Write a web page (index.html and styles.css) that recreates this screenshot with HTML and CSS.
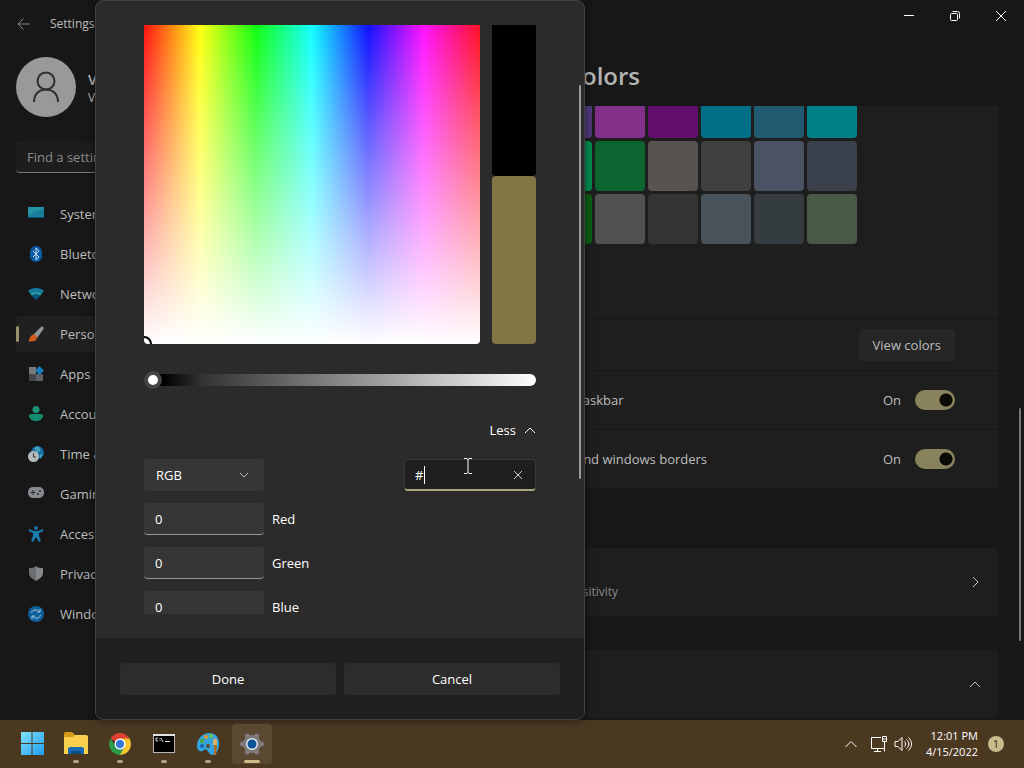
FILE: index.html
```
<!DOCTYPE html>
<html lang="en">
  <head>
    <meta charset="UTF-8" />
    <meta name="viewport" content="width=device-width, initial-scale=1.0" />
    <title>Settings</title>
    <link rel="stylesheet" href="styles.css">
  </head>
  <body>
    <div class="window">
      <header class="titlebar">
        <button class="back" aria-label="Back">
          <svg width="16" height="16" viewBox="0 0 16 16"><path d="M14 8H2.500M7.500 2.500L2 8l5.500 5.500" /></svg>
        </button>
        <span class="app-name">Settings</span>
        <div class="controls">
          <button aria-label="Minimize"><svg width="12" height="12" viewBox="0 0 12 12"><path d="M1 5.500h10" /></svg></button>
          <button aria-label="Restore"><svg width="12" height="12" viewBox="0 0 12 12"><rect x="1.500" y="3.500" width="7" height="7" rx="1" /><path d="M3.500 1.500h5a2 2 0 0 1 2 2v5" /></svg></button>
          <button aria-label="Close"><svg width="12" height="12" viewBox="0 0 12 12"><path d="M1 1l10 10M11 1L1 11" /></svg></button>
        </div>
      </header>

      <aside class="sidebar">
        <div class="profile">
          <div class="avatar">
            <svg width="28" height="32" viewBox="0 0 28 32"><circle cx="14" cy="10" r="8.500" /><path d="M2 31c0-8 5-12.500 12-12.500S26 23 26 31" /></svg>
          </div>
          <div class="user">
            <p class="name">VM User</p>
            <p class="account">VM Local Account</p>
          </div>
        </div>
        <input class="search" type="text" placeholder="Find a setting" aria-label="Find a setting" />
        <nav>
          <a href="#system">
            <svg width="16" height="16" viewBox="0 0 16 16"><path fill="#1a7f9c" d="M1 1h14a1 1 0 0 1 1 1v10H0V2a1 1 0 0 1 1-1z" /><path fill="#2496a3" d="M1 1h14a1 1 0 0 1 1 1L0 9V2a1 1 0 0 1 1-1z" /><path fill="#0a4f70" d="M0 11h16v1H0z" /></svg>
            System
          </a>
          <a href="#bluetooth">
            <svg width="16" height="16" viewBox="0 0 16 16"><rect x="2" width="12" height="16" rx="6" fill="#0b5ba7" /><path d="M5 5l6 6-3 3V2l3 3-6 6" fill="none" stroke="#c8dcef" /></svg>
            Bluetooth &amp; devices
          </a>
          <a href="#network">
            <svg width="16" height="16" viewBox="0 0 16 16"><path fill="#147ca5" d="M0 5c4-4 12-4 16 0l-2 2.500c-3-3-9-3-12 0z" /><path fill="#2793a5" d="M2 7.500c3-3 9-3 12 0L12 10c-2-2-6-2-8 0z" /><path fill="#0a5686" d="M4 10c2-2 6-2 8 0l-4 4z" /></svg>
            Network &amp; internet
          </a>
          <a href="#personalization" class="selected">
            <svg width="16" height="16" viewBox="0 0 16 16"><path fill="#929599" d="M5 9L13 1c1-1 3 0 2.500 2L9 12z" /><path fill="#cd5c1d" d="M5 8.500c2 0 4 1.500 4 3.500-1 4-6 4-9 3 2-1 1-5 5-6.500z" /></svg>
            Personalization
          </a>
          <a href="#apps">
            <svg width="16" height="16" viewBox="0 0 16 16"><path fill="#777b80" d="M1 1h7v7H1z" /><path fill="#44484d" d="M1 8h7v7H1z" /><path fill="#5d6268" d="M8 8h7v7H8z" /><path fill="#167fbd" d="M11.500 0l4.500 4.500L11.500 9 7 4.500z" /></svg>
            Apps
          </a>
          <a href="#accounts">
            <svg width="16" height="16" viewBox="0 0 16 16"><circle cx="8" cy="3.500" r="3.500" fill="#1b9178" /><path fill="#138b72" d="M3 8h10c4 0 2 7-5 7S-1 8 3 8z" /></svg>
            Accounts
          </a>
          <a href="#time">
            <svg width="16" height="16" viewBox="0 0 16 16"><circle cx="9.500" cy="6.500" r="6.500" fill="#176ca3" /><path fill="#41a1bd" d="M6 2l4-2 3 4-4 3zM12 8l3 1-3 4z" /><circle cx="5.500" cy="10.500" r="5.500" fill="#b4babd" /><path d="M5.500 7v4H8" fill="none" stroke="#34383b" /></svg>
            Time &amp; language
          </a>
          <a href="#gaming">
            <svg width="16" height="16" viewBox="0 0 16 16"><rect y="1" width="16" height="11" rx="5" fill="#888c91" /><path d="M2.500 6.500h5M5 4v5" stroke="#292b2e" fill="none" /><circle cx="10" cy="8" r="1" fill="#292b2e" /><circle cx="12" cy="5" r="1" fill="#292b2e" /></svg>
            Gaming
          </a>
          <a href="#accessibility">
            <svg width="16" height="16" viewBox="0 0 16 16"><circle cx="8" cy="2" r="2" fill="#1673aa" /><path fill="#187aaf" d="M1 3l5 2h4l5-2 .5 2L11 7v3l2 5-2 1-3-5-3 5-2-1 2-5V7L.5 5z" /></svg>
            Accessibility
          </a>
          <a href="#privacy">
            <svg width="16" height="16" viewBox="0 0 16 16"><path fill="#85898c" d="M8 0c2 2 4 2 7 2v5c0 4-4 6-7 8z" /><path fill="#6c7073" d="M8 0C6 2 4 2 1 2v5c0 4 4 6 7 8z" /></svg>
            Privacy &amp; security
          </a>
          <a href="#update">
            <svg width="16" height="16" viewBox="0 0 16 16"><circle cx="8" cy="8" r="8" fill="#0f609a" /><path d="M3.500 7c1-4 6-4 8-1M12 3v3H9M12.500 9c-1 4-6 4-8 1M4 13v-3h3" fill="none" stroke="#a6c7df" /></svg>
            Windows Update
          </a>
        </nav>
      </aside>

      <main>
        <h1>Personalization &rsaquo; Colors</h1>
        <div class="scroller">
          <section class="card colors">
            <div class="swatches"></div>
            <div class="row short">
              <button class="view">View colors</button>
            </div>
            <div class="row">
              <label for="taskbar">Show accent color on Start and taskbar</label>
              <span class="state">On</span>
              <input class="toggle" type="checkbox" id="taskbar" checked />
            </div>
            <div class="row">
              <label for="borders">Show accent color on title bars and windows borders</label>
              <span class="state">On</span>
              <input class="toggle" type="checkbox" id="borders" checked />
            </div>
          </section>
          <section class="card link">
            <div>
              <p>Contrast themes</p>
              <p class="description">Color themes for low vision, light sensitivity</p>
            </div>
            <svg width="12" height="12" viewBox="0 0 12 12"><path d="M4 1l5 5-5 5" /></svg>
          </section>
          <section class="card link" aria-label="Related links">
            <svg width="12" height="12" viewBox="0 0 12 12"><path d="M1 9l5-5 5 5" /></svg>
          </section>
        </div>
      </main>
      <div class="page-scroll"></div>

      <div class="dialog" role="dialog" aria-label="Choose custom accent color">
        <div class="picker">
          <div class="spectrum-row">
            <div class="spectrum"><span class="marker"></span></div>
            <div class="preview">
              <div class="new-color"></div>
              <div class="old-color"></div>
            </div>
          </div>
          <input class="value" type="range" min="0" max="100" value="0" aria-label="Value" />
          <button class="less">Less <svg width="12" height="12" viewBox="0 0 12 12"><path d="M1 9l5-5 5 5" /></svg></button>
          <div class="fields">
            <div class="mode">
              <select aria-label="Color mode">
                <option>RGB</option>
                <option>HSV</option>
              </select>
              <svg width="10" height="10" viewBox="0 0 10 10"><path d="M1 3l4 4 4-4" /></svg>
            </div>
            <div class="hex">
              <input type="text" value="#" aria-label="Hex" />
              <span class="caret"></span>
              <button aria-label="Clear"><svg width="10" height="10" viewBox="0 0 10 10"><path d="M1 1l8 8M9 1L1 9" /></svg></button>
            </div>
          </div>
          <div class="channel">
            <input type="text" id="red" value="0" />
            <label for="red">Red</label>
          </div>
          <div class="channel">
            <input type="text" id="green" value="0" />
            <label for="green">Green</label>
          </div>
          <div class="channel">
            <input type="text" id="blue" value="0" />
            <label for="blue">Blue</label>
          </div>
        </div>
        <footer>
          <button>Done</button>
          <button>Cancel</button>
        </footer>
        <div class="dialog-scroll"></div>
        <svg class="cursor" width="10" height="18" viewBox="0 0 10 18"><path d="M1 1.500h3l1 1 1-1h3M5 2v14M1 16.500h3l1-1 1 1h3" /></svg>
      </div>
    </div>

    <div class="taskbar">
      <div class="apps">
        <button aria-label="Start">
          <svg width="24" height="24" viewBox="0 0 24 24"><defs><linearGradient id="win" x2="1" y2="1"><stop stop-color="#7fe3fb" /><stop offset="1" stop-color="#1f9df0" /></linearGradient></defs><path fill="url(#win)" d="M1 0h10.500v11H1zM12.500 0H24v11H12.500zM1 12h10.500v11H1zM12.500 12H24v11H12.500z" /></svg>
        </button>
        <button class="open" aria-label="File Explorer">
          <svg width="26" height="24" viewBox="0 0 26 24"><path fill="#d79a16" d="M1 2a2 2 0 0 1 2-2h6l3 3h10v5H1z" /><path fill="#fbd04f" d="M1 5h9l2-2h11a2 2 0 0 1 2 2v17H1z" /><path fill="#176bb2" d="M5 22v-5a2 2 0 0 1 2-2h12a2 2 0 0 1 2 2v5z" /><path fill="#0d4d84" d="M8 19h10v3H8z" /></svg>
        </button>
        <button class="open" aria-label="Chrome">
          <svg width="24" height="24" viewBox="0 0 24 24"><path fill="#dc4132" d="M12 12L2.500 6.500A11 11 0 0 1 21.500 6.500z" /><path fill="#f8c62f" d="M12 12V6.500h9.500A11 11 0 0 1 12 23z" /><path fill="#2b9b4b" d="M12 12l4.500 3L12 23A11 11 0 0 1 2.500 6.500l5 8z" /><circle cx="12" cy="12" r="5.500" fill="#fff" /><circle cx="12" cy="12" r="4.200" fill="#3578d8" /></svg>
        </button>
        <button class="open" aria-label="Command Prompt">
          <svg width="24" height="24" viewBox="0 0 24 24"><path fill="#b5b5b5" d="M1 2h22v19H1z" /><path fill="#e3e3e3" d="M1 2h22v2H1z" /><path d="M2 4h20v16H2z" /><path d="M6 6H4v3h2M8 6v1M8 8v1M9 6l2 4M13 9.500h5" fill="none" stroke="#ddd" /></svg>
        </button>
        <button class="open" aria-label="Paint">
          <svg width="24" height="24" viewBox="0 0 24 24"><path fill="#33a5df" d="M14 1C6 1 1 7 1 14c0 5 4 7 7 4s4 4 8 5c4 0 7-5 7-11S20 1 14 1z" /><circle cx="6" cy="9" r="2.200" fill="#4aa843" /><circle cx="10" cy="5" r="2" fill="#e99324" /><circle cx="15" cy="4" r="2" fill="#72c64c" /><circle cx="6" cy="14" r="2" fill="#1769b0" /><circle cx="12" cy="14" r="2" fill="#5f4930" /><path fill="#d9b270" d="M17 8c1-2 3-2 4 0v5h-4z" /><path fill="#ae6c24" d="M18 13h3l-1 10h-2z" /></svg>
        </button>
        <button class="open active" aria-label="Settings">
          <svg width="26" height="24" viewBox="0 0 26 24"><circle cx="13" cy="12" r="9" fill="#81787a" /><path stroke="#81787a" stroke-width="5" stroke-linecap="round" d="M3.500 12h19M8.300 4l9.400 16M17.700 4L8.300 20" /><circle cx="13" cy="12" r="6" fill="#dce8f2" /><circle cx="13" cy="12" r="4.500" fill="#0b5498" /></svg>
        </button>
      </div>
      <div class="tray">
        <svg width="14" height="14" viewBox="0 0 14 14"><path d="M1.500 10L7 4.500 12.500 10" /></svg>
        <svg class="network" width="18" height="18" viewBox="0 0 18 18"><path d="M11 2.500H1.500v11H14M7.500 13.500v3M4 16.500h7M12.500 1.500h4v5h-4zM14.500 6.500v10M12.500 4h4" /></svg>
        <svg width="18" height="16" viewBox="0 0 18 16"><path d="M1 5.500h3l4-4v13l-4-4H1zM10.500 5.500c1.500 1.500 1.500 3.500 0 5M12.500 3.500c3 3 3 6 0 9M14.500 1.500c4 4 4 9 0 13" /></svg>
        <div class="clock">
          <p>12:01 PM</p>
          <p>4/15/2022</p>
        </div>
        <span class="badge">1</span>
      </div>
    </div>

    <script>
      // accent colors, nine per row
      const colors = [
        "#2a5a8c", "#6b69d6", "#4a3c90", "#51397c", "#82308a", "#600d6b", "#006f87", "#205a70", "#00818a",
        "#016a5e", "#00705f", "#00804c", "#008e52", "#0c6530", "#575350", "#403f3d", "#4a5263", "#3a3f4c",
        "#34602f", "#316a2c", "#10680f", "#0b5c16", "#515151", "#353433", "#48535a", "#343c40", "#485a45",
      ];
      const swatches = document.querySelector(".swatches");
      colors.forEach((color) => {
        const swatch = document.createElement("button");
        swatch.style.backgroundColor = color;
        swatch.setAttribute("aria-label", color);
        swatches.appendChild(swatch);
      });
    </script>
  </body>
</html>
```
FILE: styles.css
```
* {
  box-sizing: border-box;
  margin: 0;
  padding: 0;
}

body {
  display: flex;
  flex-direction: column;
  height: 100vh;
  overflow: hidden;
  background-color: #171717;
  color: #bdbdbd;
  font-family: "Open Sans", "Noto Sans", sans-serif;
  font-size: 13px;
  line-height: 20px;
}

button,
input,
select {
  border: none;
  background: none;
  color: inherit;
  font: inherit;
  outline: none;
}

svg {
  display: block;
  flex: none;
}

/* window */
.window {
  position: relative;
  flex: 1;
  min-height: 0;
  display: grid;
  grid-template-columns: 351px 1fr;
  grid-template-rows: 48px 1fr;
}

.titlebar {
  grid-column: 1 / 3;
  display: flex;
  align-items: center;
  padding-left: 16px;
}

.titlebar svg,
.link svg,
.less svg,
.mode svg,
.hex svg,
.cursor {
  fill: none;
  stroke: currentColor;
}

.back {
  color: #888;
  margin-right: 18px;
}

.app-name {
  font-size: 12px;
}

.controls {
  display: flex;
  align-self: flex-start;
  margin-left: auto;
  color: #fff;
}

.controls button {
  display: grid;
  place-items: center;
  width: 46px;
  height: 32px;
}

/* sidebar */
.sidebar {
  padding: 9px 16px;
}

.profile {
  display: flex;
  align-items: center;
  gap: 12px;
  margin-bottom: 24px;
  line-height: 18px;
}

.user {
  padding-top: 4px;
}

.avatar {
  display: grid;
  place-items: center;
  width: 60px;
  height: 60px;
  border-radius: 50%;
  background-color: #999;
}

.avatar svg {
  fill: none;
  stroke: #2e2e2e;
  stroke-width: 2;
}

.name {
  font-size: 14px;
  font-weight: 600;
}

.account {
  font-size: 12px;
}

.search {
  width: 100%;
  height: 32px;
  padding: 0 11px;
  border-bottom: 1px solid #777;
  border-radius: 4px;
  background-color: #1d1d1d;
}

.search::placeholder {
  color: #8c8c8c;
}

nav {
  display: grid;
  gap: 4px;
  margin-top: 23px;
}

nav a {
  display: flex;
  align-items: center;
  gap: 16px;
  height: 36px;
  padding-left: 12px;
  border-radius: 4px;
  color: inherit;
  text-decoration: none;
}

.selected {
  position: relative;
  background-color: #202020;
}

.selected::before {
  content: "";
  position: absolute;
  left: 0;
  width: 3px;
  height: 16px;
  border-radius: 2px;
  background-color: #9a916a;
}

/* content */
main {
  display: flex;
  flex-direction: column;
  min-height: 0;
  padding: 10px 25px 0 16px;
}

h1 {
  color: #b3b3b3;
  font-size: 24px;
  font-weight: 600;
  line-height: 36px;
}

.scroller {
  flex: 1;
  min-height: 0;
  margin-top: 12px;
  overflow: hidden;
}

.card {
  border-radius: 5px;
  background-color: #1e1e1e;
}

.colors {
  margin-top: -18px;
}

.swatches {
  display: grid;
  grid-template-columns: repeat(9, 50px);
  gap: 3px;
  padding: 0 16px 74px;
}

.swatches button {
  height: 50px;
  border-radius: 4px;
}

.row {
  display: flex;
  align-items: center;
  height: 59px;
  padding: 0 44px 0 20px;
  border-top: 1px solid #171717;
}

.short {
  height: 52px;
}

.view {
  height: 32px;
  margin-left: auto;
  padding: 0 14px;
  border-radius: 4px;
  background-color: #262626;
}

.state {
  margin-left: auto;
}

.toggle {
  appearance: none;
  width: 40px;
  height: 20px;
  margin-left: 14px;
  border-radius: 10px;
  background: radial-gradient(circle at 31px 10px, #0a0a06 6px, transparent 7px) #88835c;
}

.link {
  display: flex;
  align-items: center;
  height: 68px;
  margin-top: 60px;
  padding: 0 18px 0 10px;
}

.link + .link {
  margin-top: 34px;
}

.link svg {
  margin-left: auto;
}

.description {
  color: #888;
  font-size: 12px;
}

.page-scroll {
  position: absolute;
  top: 408px;
  right: 3px;
  width: 2px;
  height: 233px;
  border-radius: 1px;
  background-color: #777;
}

/* color dialog */
.dialog {
  position: absolute;
  top: 0;
  bottom: 0;
  left: 95px;
  width: 490px;
  display: flex;
  flex-direction: column;
  border: 1px solid #404040;
  border-radius: 8px;
  background-color: #2b2b2b;
  box-shadow: 0 0 8px #0008;
  color: #fff;
  overflow: hidden;
}

.picker {
  flex: 1;
  min-height: 0;
  margin: 24px 48px;
  overflow: hidden;
}

.spectrum-row {
  display: flex;
  gap: 12px;
  height: 319px;
}

.spectrum {
  position: relative;
  flex: 1;
  overflow: hidden;
  border-radius: 0 0 4px 4px;
  background: linear-gradient(transparent, #fff), linear-gradient(to right, #f11, #ff1, #1f1, #1ff, #11f, #f1f, #f12);
}

.marker {
  position: absolute;
  bottom: -8px;
  left: -8px;
  width: 16px;
  height: 16px;
  border: 2px solid #000;
  border-radius: 50%;
}

.preview {
  display: flex;
  flex-direction: column;
  width: 44px;
}

.new-color {
  flex: 9;
  border-radius: 0 0 4px 4px;
  background-color: #000;
}

.old-color {
  flex: 10;
  border-radius: 4px;
  background-color: #827644;
}

.value {
  appearance: none;
  display: block;
  width: 100%;
  height: 12px;
  margin-top: 30px;
  border-radius: 6px;
  background: linear-gradient(to right, #000 5%, #333 15%, #fff);
}

.value::-webkit-slider-thumb {
  appearance: none;
  width: 18px;
  height: 18px;
  border: 4px solid #454545;
  border-radius: 50%;
  background-color: #fff;
}

.less {
  display: flex;
  align-items: center;
  gap: 8px;
  height: 32px;
  margin: 28px 0 13px auto;
}

.fields {
  display: flex;
  justify-content: space-between;
  margin-bottom: 12px;
}

.mode {
  position: relative;
  width: 120px;
}

.mode select {
  appearance: none;
  width: 100%;
  height: 32px;
  padding: 0 12px;
  border-radius: 4px;
  background-color: #363636;
}

.mode svg {
  position: absolute;
  top: 11px;
  right: 15px;
  color: #bbb;
  pointer-events: none;
}

.hex {
  position: relative;
  display: flex;
  align-items: center;
  width: 132px;
  height: 32px;
  padding-right: 12px;
  border: 1px solid #383838;
  border-bottom: 2px solid #aaa67b;
  border-radius: 4px;
  background-color: #1f1f1f;
}

.hex input {
  flex: 1;
  min-width: 0;
  padding-left: 10px;
}

.hex svg {
  color: #ccc;
}

.caret {
  position: absolute;
  top: 6px;
  left: 19px;
  width: 1px;
  height: 18px;
  background-color: #fff;
}

.channel {
  display: flex;
  align-items: center;
  gap: 8px;
  margin-bottom: 12px;
}

.channel input {
  width: 120px;
  height: 32px;
  padding: 0 11px;
  border-bottom: 1px solid #999;
  border-radius: 4px;
  background-color: #363636;
}

footer {
  display: flex;
  gap: 8px;
  padding: 24px;
  border-top: 1px solid #1c1c1c;
  background-color: #202020;
}

footer button {
  flex: 1;
  height: 32px;
  border-radius: 4px;
  background-color: #2c2c2c;
}

.dialog-scroll {
  position: absolute;
  top: 84px;
  right: 3px;
  width: 2px;
  height: 394px;
  border-radius: 1px;
  background-color: #999;
}

.cursor {
  position: absolute;
  top: 456px;
  left: 367px;
}

/* taskbar */
.taskbar {
  display: flex;
  align-items: center;
  justify-content: space-between;
  height: 48px;
  padding: 0 20px 0 12px;
  background-color: #4b3821;
  color: #fff;
}

.apps {
  display: flex;
  gap: 4px;
}

.apps button {
  position: relative;
  display: grid;
  place-items: center;
  width: 40px;
  height: 40px;
  border-radius: 4px;
}

.open::after {
  content: "";
  position: absolute;
  bottom: 1px;
  width: 6px;
  height: 3px;
  border-radius: 2px;
  background-color: #b3a386;
}

.apps .active {
  background-color: #5a4830;
}

.active::after {
  width: 16px;
  background-color: #d0bd8c;
}

.tray {
  display: flex;
  align-items: center;
  gap: 6px;
}

.tray svg {
  fill: none;
  stroke: currentColor;
}

.tray .network {
  margin-left: 6px;
}

.clock {
  margin: 0 4px 0 8px;
  font-size: 11px;
  line-height: 16px;
  text-align: right;
}

.badge {
  width: 16px;
  height: 16px;
  border-radius: 50%;
  background-color: #c9bb8b;
  color: #33291a;
  font-size: 11px;
  line-height: 16px;
  text-align: center;
}
```
